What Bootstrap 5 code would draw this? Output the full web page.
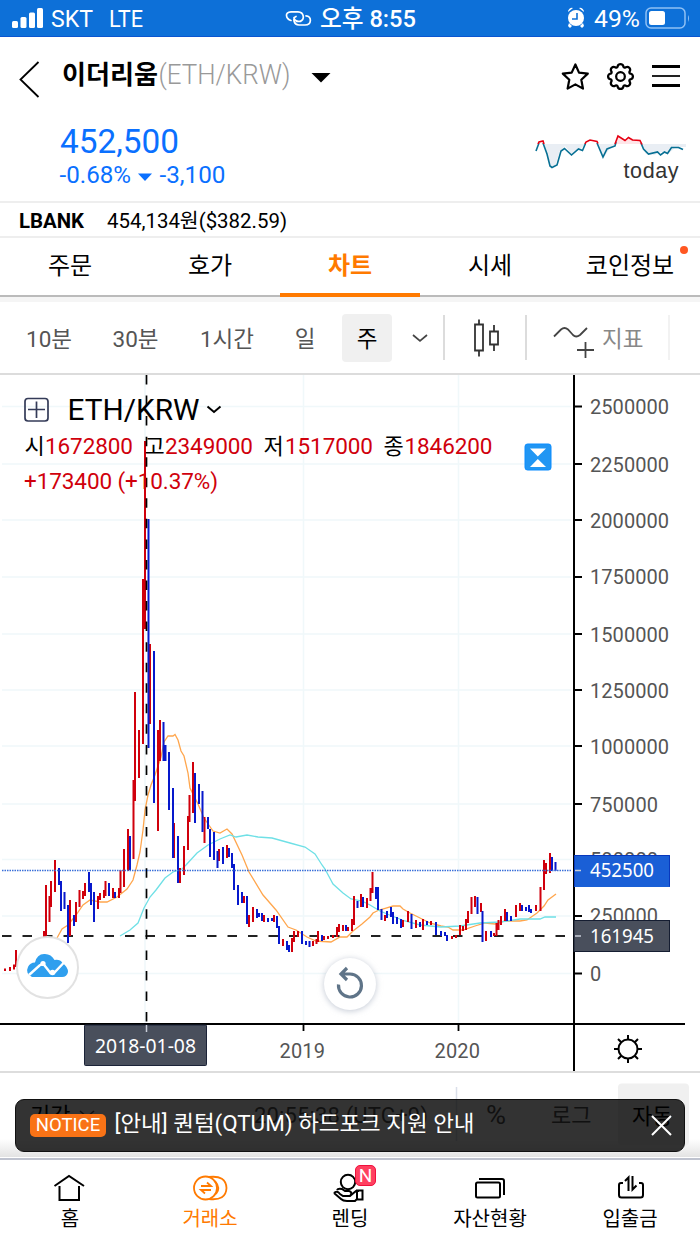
<!DOCTYPE html>
<html lang="ko">
<head>
<meta charset="utf-8">
<meta name="viewport" content="width=device-width, initial-scale=1">
<title>이더리움 (ETH/KRW)</title>
<link rel="stylesheet" href="https://cdn.jsdelivr.net/npm/bootstrap@5.3.0/dist/css/bootstrap.min.css">
<style>
body{width:700px;height:1245px;overflow:hidden;background:#fff;color:#000;font-family:Roboto,"Noto Sans CJK KR",sans-serif;line-height:1}
svg{display:block;flex:none}
svg text{font-family:Roboto,"Noto Sans CJK KR",sans-serif}
.statusbar{height:37px;background:#0d70d8;color:#fff;border-bottom:1px solid #0a55d0}
.pricebox{height:166px;border-bottom:2px solid #eee}
.lbank{height:35px;border-bottom:2px solid #eee}
.tabrow{height:59px;border-bottom:2px solid #bbb}
.tabrow .nav-link{width:140px;height:59px;padding:0;font-size:24px;line-height:57px;color:#000;text-align:center;position:relative}
.tabrow .nav-link.active{color:#ff7a00;font-weight:700;border-bottom:4px solid #ff7a00}
.newdot{position:absolute;right:12px;top:8px;width:8px;height:8px;border-radius:50%;background:#ff5722}
.tools{height:78px;border-top:5px solid #f5f5f5;border-bottom:2px solid #dcdcdc;color:#555;font-size:22.5px}
.tools>div{flex:none}
.tools .txt{padding-top:4px}
.vsep{width:2px;height:45px;background:#dcdcdc}
.weekbtn{width:50px;height:48px;margin-left:13px;border-radius:4px;background:#f0f0f0;color:#000}
.chartbox{height:696px}
.under{height:87px;border-top:2px solid #ddd}
.noticebar{left:15px;top:1099px;width:670px;height:53px;border-radius:9px;background:rgba(0,0,0,.8);border:1px solid #111;color:#fff}
.noticetag{background:#f97316;border-radius:5px;width:76px;height:23px;font-size:18.5px;line-height:23px;text-align:center}
.bottomnav{height:88px;border-top:2px solid #bfc3cf;background:#fff;font-size:20px}
.bottomnav a{width:140px;color:#111;text-decoration:none}
.bottomnav svg{margin-bottom:6px}
.bottomnav a.on{color:#ff7a00}
.newflag{left:355px;top:1165px;width:21px;height:21px;border-radius:5px;background:#ff4060;border:1px solid #f0103c;color:#fff;font-size:19px;line-height:20px;text-align:center}
</style>
<script src="https://cdn.jsdelivr.net/npm/bootstrap@5.3.0/dist/js/bootstrap.bundle.min.js"></script>
</head>
<body class="d-flex flex-column position-relative">

<header class="statusbar flex-shrink-0">
<svg width="700" height="36" viewBox="0 0 700 36" fill="#fff" font-size="23.5">
<rect x="12" y="21" width="6" height="7" rx="1.5"/><rect x="20.500" y="17" width="6" height="11" rx="1.500"/><rect x="29" y="12.500" width="6" height="15.500" rx="1.500"/><rect x="37" y="8" width="6" height="20" rx="1.500"/>
<text x="51" y="27" textLength="42" lengthAdjust="spacingAndGlyphs">SKT</text><text x="109" y="27" textLength="34" lengthAdjust="spacingAndGlyphs">LTE</text>
<g fill="none" stroke="#fff" stroke-width="1.700" stroke-linecap="round"><path d="M291 20.500C286 19 284 12 291 11.800H298C304 12 305.500 20 299.500 21.500H296.500M296 16.500C292.500 18 293.500 25 299 25H305C312 25 312 16 306 15.800M300.500 21.500C297 21.500 293.500 20 294 17.500"/></g>
<text x="320" y="27" textLength="96" lengthAdjust="spacingAndGlyphs" font-weight="500">오후 8:55</text>
<circle cx="576" cy="18" r="8"/><path d="M568 12a4 4 0 0 1 5-4zM584 12a4 4 0 0 0-5-4zM569 23l3 3-2 2-2-2zM583 23l-3 3 2 2 2-2z"/><path d="M577 13v6h-5" fill="none" stroke="#0d70d8" stroke-width="1.600"/>
<text x="594" y="27" textLength="46" lengthAdjust="spacingAndGlyphs">49%</text>
<rect x="646" y="8" width="39" height="20" rx="5" fill="none" stroke="#8fc0f4" stroke-width="1.500"/><rect x="649" y="11" width="16" height="14" rx="2.500"/><path d="M688 15q2 3 0 7z" fill="#8fc0f4"/>
</svg>
</header>

<section class="pricebox flex-shrink-0">
<svg width="700" height="164" viewBox="0 37 700 164">
<path d="M38.500 62L20.500 79.500L38.500 97" fill="none" stroke="#000" stroke-width="1.800"/>
<text x="62" y="84" font-size="26" font-weight="700" textLength="96" lengthAdjust="spacingAndGlyphs">이더리움</text>
<text x="158.500" y="84" font-size="27" font-weight="300" fill="#999" textLength="132" lengthAdjust="spacingAndGlyphs">(ETH/KRW)</text>
<path d="M311.500 73h19L321 82.500z"/>
<path d="M575.400 64.500l3.600 8.100 8.800 1-6.500 6.100 1.700 8.900-7.600-4.200-7.800 4.200 1.700-8.900-6.500-6.100 8.900-1z" fill="none" stroke="#000" stroke-width="2.200" stroke-linejoin="round"/>
<g fill="none" stroke="#000" stroke-width="1.450" transform="translate(608.100 64.100) scale(1.550)"><circle cx="8" cy="8" r="2.800"/><path d="M9.796 1.343c-.527-1.790-3.065-1.790-3.592 0l-.094.319a.873.873 0 0 1-1.255.520l-.292-.160c-1.640-.892-3.433.902-2.540 2.541l.159.292a.873.873 0 0 1-.520 1.255l-.319.094c-1.790.527-1.790 3.065 0 3.592l.319.094a.873.873 0 0 1 .520 1.255l-.160.292c-.892 1.640.901 3.434 2.541 2.540l.292-.159a.873.873 0 0 1 1.255.520l.094.319c.527 1.790 3.065 1.790 3.592 0l.094-.319a.873.873 0 0 1 1.255-.520l.292.160c1.640.893 3.434-.902 2.540-2.541l-.159-.292a.873.873 0 0 1 .520-1.255l.319-.094c1.790-.527 1.790-3.065 0-3.592l-.319-.094a.873.873 0 0 1-.520-1.255l.160-.292c.893-1.640-.902-3.433-2.541-2.540l-.292.159a.873.873 0 0 1-1.255-.520z"/></g>
<path d="M652 66.500h28M652 85.500h28" stroke="#000" stroke-width="3"/><path d="M652 76h28" stroke="#222" stroke-width="2"/>
<g fill="#0a70ff"><text x="60" y="153" font-size="34" textLength="119" lengthAdjust="spacingAndGlyphs">452,500</text>
<text x="59.500" y="183" font-size="24" textLength="71.500" lengthAdjust="spacingAndGlyphs">-0.68%</text><path d="M138 173.500h14L145 181z"/><text x="159.500" y="183" font-size="24" textLength="66" lengthAdjust="spacingAndGlyphs">-3,100</text></g>
<path d="M544 144l7 22h4l5-15 5-5 7 9 8-6 6-5h11l7 13 6-9 7-4h23l6 10 8 1 7-3 7 2 8-7h10v-3z" fill="#e9eef4"/><path d="M615 144l3-8 8 4 3-2 11 2 2 4z" fill="#ffe5e8"/>
<path d="M536 151l3-8M543 143l4 11 3 12 2 1.500 5-2.500 4-14 3.500-2.500 7 6.500 7-6 4 1.500 3-7M597 143l6 14 4-8 8-3 1-4M641 143l2.500 6 5 5 9-2 3 3 4-3 3 1.500 4-6h7l4.500 2" fill="none" stroke="#077094" stroke-width="1.600"/>
<path d="M538 144l1-2 4-1 1 3M585 144l1-2 4-2 7 1.500 1 2M615 144l3-8 7 4.500 3.500-3 4 2.500 7.500.500 2 4" fill="none" stroke="#e60012" stroke-width="1.600"/>
<text x="623.500" y="178" font-size="21.500" fill="#333" style="font-family:'Liberation Sans',sans-serif" textLength="55">today</text>
</svg>
</section>

<section class="lbank flex-shrink-0">
<svg width="700" height="33" viewBox="0 203 700 33"><text x="19" y="228" font-weight="700" font-size="20.500" textLength="65" lengthAdjust="spacingAndGlyphs">LBANK</text><text x="107" y="228" font-size="20.500" textLength="180" lengthAdjust="spacingAndGlyphs">454,134원($382.59)</text></svg>
</section>

<nav class="nav tabrow flex-shrink-0 flex-nowrap">
<a class="nav-link">주문</a><a class="nav-link">호가</a><a class="nav-link active">차트</a><a class="nav-link">시세</a><a class="nav-link">코인정보<span class="newdot"></span></a>
</nav>

<section class="tools d-flex align-items-center flex-shrink-0 text-center">
<div class="txt" style="width:98px">10분</div><div class="txt" style="width:75px">30분</div><div class="txt" style="width:108px">1시간</div><div class="txt" style="width:48px">일</div>
<div class="weekbtn txt d-flex align-items-center justify-content-center">주</div>
<svg width="51" height="48" viewBox="0 0 51 48" fill="none" stroke="#444" stroke-width="1.700"><path d="M21 21l7 6 7-6"/></svg>
<div class="vsep"></div>
<svg width="80" height="48" viewBox="445 314 80 48" fill="none" stroke="#333" stroke-width="1.800"><path d="M475 324.500h8v26h-8zM490 331.500h8v13h-8zM479 319.500v5M479 351v5.500M494 325v6M494 345v6"/></svg>
<div class="vsep"></div>
<svg width="68" height="48" viewBox="527 314 68 48" fill="none" stroke="#444" stroke-width="1.800"><path d="M554 336.500L561 329.500q3.500-3 7 0l5 5.500q3 3 7 0L587 328M577 350h17M585.500 342v16"/></svg>
<div class="txt" style="margin-left:7px;color:#888">지표</div>
<div class="vsep ms-auto" style="margin-right:30px;background:#f2f2f2"></div>
</section>

<main class="chartbox flex-shrink-0">
<svg width="700" height="697" viewBox="0 375 700 697">
<path d="M2 406.500H571M2 464H571M2 520H571M2 577H571M2 634H571M2 690H571M2 746H571M2 804H571M2 859.500H571M2 916H571M2 973.500H571M145 375V1023M303.500 375V1023M458.500 375V1023" stroke="#f0f8fa" stroke-width="1.500"/>
<path d="M57 938L62 929L68 925L76 915L83 905L90 900L100 902L107 902L117 897L127 889L133 880L137 865L140 852L143 830L145 810L148 795L151 785L155 775L161 757L164 742L168 736L173 736L175 734.500L178 740L181 751L184 756L188 773L190 788L198 804L204 818L213 831L220 833L227 829L232 834L242 855L249 872L263 895L276 910L288 927L296 930L307 937L316 941L331 942L340 937L347 937L353 931L362 924L370 917L373 913L379 910L386 908L393 906L400 906L403 909L410 913L420 918L430 923L441 926L448 927L453 930L463 930L475 926L485 923L495 924L505 921L520 921L527 920L537 913L544 906L548 900L556 894" fill="none" stroke="#ffa64d" stroke-width="1.300"/>
<path d="M120 936L130 930L138 923L144 908L150 897L156 890L165 878L173 872L182 869L186 865L197 853L208 845L220 839L230 835L236 837L247 835L258 837L272 838L290 843L305 847L315 854L322 865L325 869L333 884L343 893L351 899L362 901L370 905L380 911L392 916L405 921L420 925L441 927L460 926L480 923L500 922L520 919L540 919L545 917L556 917" fill="none" stroke="#6fe0e6" stroke-width="1.300"/>
<path d="M2 936H571" stroke="#222" stroke-width="1.800" stroke-dasharray="9.500 11"/>
<path stroke="#d0000c" stroke-width="2" d="M5 968.500V971M10 967V971M14 964.500V969.500M16 950V967M44 931V940M46 885V936M49.500 896V922M51 881V907M55 860V892M70 900V936M76 902V922M79.500 890V907M83 891V899M85 883V896M98 896V909M100 893V900M104 890V898M105.500 881V896M113 888V898M119 888V898M120.500 870V893M124 849V887M128 829V871M133.500 780V859M135 692V801M139 730V778M143 579V744M145 441V629M150 644V724M158 730V831M160 720V761M174 823V858M180 868V883M184 846V875M188 816V850M189.500 795V822M193 762V813M204.500 817V843M219 849V861M227 845V858M244 896V903M249 915V927M253 907V922M264 915V922M274 915V922M283 939V946M292 938V952M294 931V942M298 931V937M313 941V946M316.500 939V944M318 931V942M324 936V940M328 936V939M333 935V938M337 927V937M339 924V932M343 925V931M348 927V931M352 919V931M354 896V925M361 894V907M367 898V908M370.500 888V901M372.500 872V893M385 915V921M403 920V927M408 911V922M416 920V928M423 919V930M431 921V925M452 936V939M456 935V938M460 925V935M463 926V931M466 919V930M468 911V923M471.500 897V914M475 896V907M481 903V912M486 931V941M494 933V936M496.500 923V936M498.500 920V930M501 916V925M505 909V921M516 905V917M520 903V911M536 905V911M540.500 887V911M544 860V890M546 863V874M550 853V873"/>
<path stroke="#0719cc" stroke-width="2" d="M59 868V885M61 881V911M64.500 892V909M68 905V943M74 915V926M89 872V892M91 883V905M94 892V922M109 883V896M115 892V898M130 836V870M148.500 519V748M154 651V803M163.500 722V761M165.500 745V761M169 752V810M173 788V858M178 836V883M195 773V823M199 784V804M202.500 791V832M208 817V829M210 829V857M214 832V860M217.500 851V868M223 847V864M229 848V857M232 853V868M234 864V890M238 885V905M242 892V903M247 896V924M257 909V918M259 913V917M262 913V921M268 918V922M272 918V921M277 916V928M279 926V944M287 941V950M289 945V952M302 931V944M306 941V945M309.500 941V947M322 935V941M346 925V931M357.500 901V908M363 897V907M376 887V899M378 887V910M381.500 909V920M387 911V918M391 907V917M393 912V924M397 917V924M401 919V928M411.500 914V929M420 922V927M427 921V925M436 922V935M441 931V936M445 932V936M447 935V941M477.500 897V914M482.500 911V942M491 931V937M507 912V921M511 916V921M522 905V911M526 907V911M529 905V912M531 909V913M552 857V871M555.500 862V871"/>
<path d="M146.500 375V1023" stroke="#000" stroke-width="1.700" stroke-dasharray="9.500 11.050"/>
<path d="M2 870.500H571" stroke="#3a6fd8" stroke-width="1.400" stroke-dasharray="1.500 1"/>
<path d="M574 375V1072M0 1024H685" stroke="#000" stroke-width="2"/>
<path d="M575 406.500h7M575 464h7M575 520h7M575 577h7M575 634h7M575 690h7M575 746h7M575 804h7M575 859.500h7M575 916h7M575 973.500h7M303.500 1025v6M458.500 1025v6" stroke="#000" stroke-width="1.800"/>
<g fill="#555" font-size="20">
<text x="590" y="414" textLength="79">2500000</text><text x="590" y="472" textLength="79">2250000</text><text x="590" y="528" textLength="79">2000000</text><text x="590" y="584" textLength="79">1750000</text><text x="590" y="642" textLength="79">1500000</text><text x="590" y="698" textLength="79">1250000</text><text x="590" y="754" textLength="79">1000000</text><text x="590" y="812" textLength="68">750000</text><text x="590" y="867" textLength="68">500000</text><text x="590" y="923" textLength="68">250000</text><text x="590" y="981" textLength="11">0</text>
<text x="279.500" y="1058" textLength="45.500">2019</text><text x="434.500" y="1058" textLength="45.500">2020</text></g>
<rect x="574" y="855" width="96" height="32" fill="#1a5fd6"/><path d="M574.500 886.500V855.500H669.500V886.500" fill="none" stroke="#0838bd"/>
<rect x="574" y="920.500" width="95.500" height="31" fill="#494f5c" stroke="#151d31"/>
<path d="M575 870.500h6M575 936h6" stroke="#c9ced9" stroke-width="1.400"/>
<g fill="#fff" font-size="20"><text x="590" y="877" textLength="64" lengthAdjust="spacingAndGlyphs" style="font-family:'Noto Sans',sans-serif">452500</text><text x="590" y="943" textLength="64" lengthAdjust="spacingAndGlyphs" style="font-family:'Noto Sans',sans-serif">161945</text></g>
<rect x="84.500" y="1025" width="122" height="40.500" rx="1" fill="#494f5c" stroke="#1b2338"/><path d="M146.500 1025v7" stroke="#c9ced9" stroke-width="1.500"/>
<text x="95" y="1053" fill="#fff" font-size="20" style="font-family:'Noto Sans',sans-serif" textLength="101" lengthAdjust="spacingAndGlyphs">2018-01-08</text>
<g stroke="#000" stroke-width="2" fill="none"><circle cx="628" cy="1049" r="9.500"/><path d="M628 1039v-4M628 1059v4M618 1049h-4M638 1049h4M621 1042l-3-3M635 1042l3-3M621 1056l-3 3M635 1056l3 3"/></g>
<g fill="none" stroke="#343b58" stroke-width="1.700"><rect x="25" y="398.500" width="23" height="22.500" rx="3"/><path d="M28 409.500h17M36.500 401.500v16.500"/></g>
<text x="67.500" y="419.500" font-size="29" textLength="132" lengthAdjust="spacingAndGlyphs">ETH/KRW</text><path d="M207.500 406.500l6.500 5.500 6.500-5.500" fill="none" stroke="#000" stroke-width="2"/>
<g font-size="22"><text x="24.500" y="453.500">시</text><text x="144.500" y="453.500">고</text><text x="263.500" y="453.500">저</text><text x="383.500" y="453.500">종</text>
<g fill="#d0000c" font-size="22.500"><text x="45" y="454" textLength="88">1672800</text><text x="165" y="454" textLength="88">2349000</text><text x="285" y="454" textLength="88">1517000</text><text x="404.500" y="454" textLength="88">1846200</text><text x="24" y="489" textLength="194">+173400 (+10.37%)</text></g></g>
<rect x="525" y="444" width="26" height="26" rx="2.500" fill="#2196f3" stroke="#0a8cff"/><path d="M530 448.500h16L537.800 456.500zM530 467h16L537.800 459z" fill="#fff"/>
<circle cx="47.500" cy="967.500" r="30.500" fill="#fff" stroke="#e2e2e2" stroke-width="2"/>
<path d="M32 977Q25 973 28 967Q30 962.500 35 962.500Q37 954 44 954Q51 953.500 54.500 960Q60 959 62.500 963Q68 967 68 972Q67 977 62 977Z" fill="#2f9fee"/><path d="M29 975L39.500 965.500L43 963.500L50.500 973H54L64 962.500" fill="none" stroke="#fff" stroke-width="2.400"/><circle cx="43" cy="963.500" r="2.600" fill="#fff"/><circle cx="52.500" cy="972.500" r="2.800" fill="#fff"/>
<circle cx="350" cy="984" r="26" fill="#fff" style="filter:drop-shadow(0 1px 3px #9aa3b599)"/>
<path d="M338.500 984.500A11.500 11.500 0 1 0 350 974H342M347 968L341 974L347 980" fill="none" stroke="#5f7488" stroke-width="3.200"/>
</svg>
</main>

<section class="under flex-shrink-0">
<svg width="700" height="84" viewBox="0 1074 700 84">
<defs><linearGradient id="edge" x2="0" y2="1"><stop stop-color="#fff"/><stop offset="1" stop-color="#e3e3e3"/></linearGradient></defs>
<rect y="1140" width="700" height="18" fill="url(#edge)"/>
<rect x="618" y="1084.500" width="71" height="62" rx="4" fill="#f0f0f0"/><path d="M456.500 1088v54" stroke="#dadfe9" stroke-width="1.500"/>
<g font-size="22" fill="#555"><text x="30" y="1124" fill="#000">기간</text><path d="M80 1112l7 6 7-6" fill="none" stroke="#555" stroke-width="1.500"/><text x="254" y="1124" textLength="174">20:55:38 (UTC+9)</text><text x="486" y="1125" font-size="25" textLength="20" lengthAdjust="spacingAndGlyphs">%</text><text x="551" y="1124">로그</text><text x="632" y="1125" fill="#000">자동</text></g>
</svg>
</section>

<footer class="bottomnav d-flex flex-shrink-0 text-center">
<a><svg width="140" height="43" viewBox="0 1160 140 43" fill="none" stroke="#000" stroke-width="2"><path d="M54.500 1186L69 1176L84 1186M59.500 1186V1200H79V1186"/></svg>홈</a>
<a class="on"><svg width="140" height="43" viewBox="140 1160 140 43" fill="none" stroke="#ff7a00" stroke-width="1.800"><ellipse cx="205.500" cy="1188" rx="11.500" ry="11.500"/><path d="M209 1177q17-2 17.500 11q-.5 13-17.500 11M215 1181q6 7 1 13M201 1186h10l-4-3.500M211 1190h-10l4 3.500"/></svg>거래소</a>
<a><svg width="140" height="43" viewBox="280 1160 140 43" fill="none" stroke="#000" stroke-width="2"><circle cx="348" cy="1182" r="7.200"/><path d="M334 1193q3-3 6 1l3 2h7q3-4-1-5h-4l-3-2q-4-1-5 1M334 1193l7 6q2 2 6 2h8l3-3M350 1196l6-5h3M357 1190.500h5.500v9H357z"/></svg>렌딩</a>
<a><svg width="140" height="43" viewBox="420 1160 140 43" fill="none" stroke="#000" stroke-width="2"><rect x="476" y="1182.500" width="24" height="15" rx="1.500"/><path d="M479 1179h23q2 0 2 2v14"/></svg>자산현황</a>
<a><svg width="140" height="43" viewBox="560 1160 140 43" fill="none" stroke="#000" stroke-width="2"><path d="M623 1183h-2q-2 0-2 2v10q0 2.500 2.500 2.500h19q2.500 0 2.500-2.500v-10q0-2-2-2h-2M625 1181l3.500-3.500V1191M632.500 1176V1189.500L636.500 1185.500"/></svg>입출금</a>
</footer>

<div class="noticebar position-absolute d-flex align-items-center">
<span class="noticetag" style="margin-left:14px">NOTICE</span>
<svg class="ms-2" width="380" height="40" viewBox="114 1106 380 40"><text x="114.500" y="1131" fill="#fff" font-size="22" textLength="360" lengthAdjust="spacingAndGlyphs">[안내] 퀀텀(QTUM) 하드포크 지원 안내</text></svg>
<svg class="ms-auto" style="margin-right:5px" width="36" height="24" viewBox="0 0 36 24" stroke="#fff" stroke-width="2"><path d="M9 2l19 19M28 2L9 21"/></svg>
</div>
<span class="newflag position-absolute">N</span>
</body>
</html>
